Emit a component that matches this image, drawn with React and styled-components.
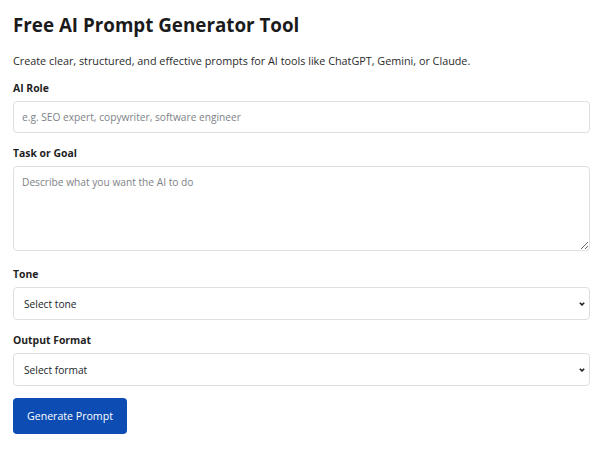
import React from "react";
import styled, { createGlobalStyle } from "styled-components";

const Global = createGlobalStyle`
  html, body { margin: 0; padding: 0; background: #fff; }
  body { font-family: "Open Sans", "Noto Sans", sans-serif; color: #212529; }
  * { box-sizing: border-box; }
`;

const Page = styled.main`
  padding: 14px 10px 0 13px;
`;

const Title = styled.h1`
  margin: 0;
  font-size: 18.8px;
  line-height: 23px;
  font-weight: 700;
  color: #1b1b1b;
`;

const Intro = styled.p`
  margin: 16px 0 12px;
  font-size: 10.8px;
  line-height: 16px;
  color: #2b2b2b;
`;

const Field = styled.div`
  display: flex;
  flex-direction: column;
  margin-bottom: ${(p) => p.$gap || 13}px;
`;

const Label = styled.label`
  font-size: 10.4px;
  font-weight: 700;
  line-height: 14px;
  margin-bottom: 6px;
  color: #1f1f1f;
`;

const controlBase = `
  width: 100%;
  border: 1px solid #dcdfe3;
  border-radius: 4px;
  background: #fff;
  font-family: "Open Sans", "Noto Sans", sans-serif;
  font-size: 10.2px;
  color: #212529;
  outline: none;
`;

const TextInput = styled.input`
  ${controlBase}
  height: 32px;
  padding: 0 8px;
  &::placeholder { color: #7d8287; }
`;

const TextArea = styled.textarea`
  ${controlBase}
  display: block;
  height: 85px;
  padding: 8px 8px;
  line-height: 14px;
  resize: vertical;
  &::placeholder { color: #7d8287; }
`;

const SelectWrap = styled.div`
  position: relative;
`;

const Select = styled.select`
  ${controlBase}
  appearance: none;
  height: 33px;
  padding: 0 24px 0 10px;
`;

const Chevron = styled.svg`
  position: absolute;
  right: 5px;
  top: 50%;
  width: 6px;
  height: 5px;
  transform: translateY(-50%);
  pointer-events: none;
`;

const Button = styled.button`
  height: 36px;
  padding: 0 14px;
  border: none;
  border-radius: 4px;
  background: #0d4db3;
  color: #fff;
  font-family: "Open Sans", "Noto Sans", sans-serif;
  font-size: 10.6px;
  cursor: pointer;
`;

function Dropdown({ placeholder, options }) {
  return (
    <SelectWrap>
      <Select defaultValue="">
        <option value="">{placeholder}</option>
        {options.map((o) => (
          <option key={o}>{o}</option>
        ))}
      </Select>
      <Chevron viewBox="0 0 6 5">
        <path d="M0.8 1.2 L3 3.4 L5.2 1.2" fill="none" stroke="#222" strokeWidth="1.6" />
      </Chevron>
    </SelectWrap>
  );
}

export default function App() {
  return (
    <Page>
      <Global />
      <Title>Free AI Prompt Generator Tool</Title>
      <Intro>
        Create clear, structured, and effective prompts for AI tools like ChatGPT, Gemini, or Claude.
      </Intro>
      <Field>
        <Label>AI Role</Label>
        <TextInput placeholder="e.g. SEO expert, copywriter, software engineer" />
      </Field>
      <Field $gap={16}>
        <Label>Task or Goal</Label>
        <TextArea placeholder="Describe what you want the AI to do" />
      </Field>
      <Field>
        <Label>Tone</Label>
        <Dropdown placeholder="Select tone" options={["Professional", "Friendly", "Persuasive"]} />
      </Field>
      <Field $gap={12}>
        <Label>Output Format</Label>
        <Dropdown placeholder="Select format" options={["Paragraph", "Bullet points", "Table"]} />
      </Field>
      <Button>Generate Prompt</Button>
    </Page>
  );
}
